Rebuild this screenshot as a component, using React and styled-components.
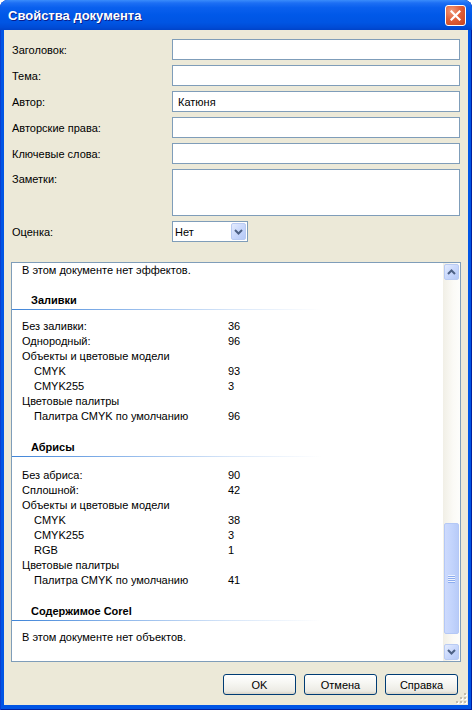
import React from 'react';
import styled, { createGlobalStyle } from 'styled-components';

const GlobalStyle = createGlobalStyle`
  html, body {
    margin: 0;
    padding: 0;
    background: #ffffff;
  }
  body {
    font-family: 'Liberation Sans', Arial, sans-serif;
    font-size: 11px;
    color: #000;
  }
`;

const Window = styled.div`
  width: 472px;
  height: 710px;
  display: flex;
  flex-direction: column;
  background: #0055e5;
  border-radius: 8px 8px 0 0;
  box-shadow: inset 1px 0 0 #0a3fd0, inset -1px 0 0 #00209f, inset 0 -1px 0 #00209f;
  overflow: hidden;
`;

const TitleBar = styled.div`
  height: 30px;
  flex: none;
  display: flex;
  align-items: center;
  justify-content: space-between;
  padding: 0 6px 0 8px;
  box-sizing: border-box;
  background: linear-gradient(
    to bottom,
    #3a8cfb 0%,
    #1d6ff4 10%,
    #0a60ee 25%,
    #0058e8 50%,
    #0055e3 75%,
    #004bd6 92%,
    #0043c8 100%
  );
`;

const Title = styled.span`
  font-family: 'Liberation Sans', Arial, sans-serif;
  font-weight: bold;
  font-size: 13px;
  color: #ffffff;
  text-shadow: 1px 1px 0 #0a1e8c;
`;

const CloseButton = styled.div`
  width: 21px;
  height: 21px;
  box-sizing: border-box;
  border: 1px solid #ffffff;
  border-radius: 3px;
  background: radial-gradient(circle at 30% 25%, #f09a7a 0%, #e0603a 45%, #c8431c 100%);
  display: flex;
  align-items: center;
  justify-content: center;
`;

const Client = styled.div`
  flex: 1;
  margin: 0 4px 5px;
  background: #ece9d8;
  padding: 9px 7px 10px 8px;
  display: flex;
  flex-direction: column;
  position: relative;
`;

const Form = styled.div`
  display: grid;
  grid-template-columns: 160px 288px;
  row-gap: 5px;
  align-items: center;
`;

const Label = styled.div`
  line-height: 13px;
  align-self: ${p => (p.$top ? 'start' : 'center')};
  padding-top: ${p => (p.$top ? '4px' : '2px')};
`;

const TextInput = styled.input`
  height: 21px;
  box-sizing: border-box;
  border: 1px solid #7f9db9;
  background: #ffffff;
  padding: 0 4px 0 5px;
  margin: 0;
  font-family: 'Liberation Sans', Arial, sans-serif;
  font-size: 11px;
  color: #000;
  outline: none;
`;

const NotesArea = styled.textarea`
  height: 47px;
  box-sizing: border-box;
  border: 1px solid #7f9db9;
  background: #ffffff;
  margin: 0;
  padding: 2px 4px;
  resize: none;
  font-family: 'Liberation Sans', Arial, sans-serif;
  font-size: 11px;
  outline: none;
`;

const Combo = styled.div`
  width: 76px;
  height: 21px;
  box-sizing: border-box;
  border: 1px solid #7f9db9;
  background: #ffffff;
  display: flex;
  align-items: center;
`;

const ComboText = styled.span`
  flex: 1;
  padding-left: 2px;
`;

const ArrowButton = styled.div`
  width: ${p => p.$w || 15}px;
  height: ${p => p.$h || 16}px;
  box-sizing: border-box;
  margin: 1px;
  border: 1px solid #b9cbf3;
  border-radius: 2px;
  background: linear-gradient(to bottom right, #e4ecfe 0%, #c9d8fc 50%, #b5c9f7 100%);
  display: flex;
  align-items: center;
  justify-content: center;
  flex: none;
`;

const Panel = styled.div`
  margin-top: 20px;
  margin-left: -1px;
  width: 450px;
  height: 400px;
  box-sizing: border-box;
  border: 1px solid #7f9db9;
  background: #ffffff;
  display: flex;
`;

const Content = styled.div`
  flex: 1;
  padding-left: 10px;
  overflow: hidden;
`;

const Note = styled.div`
  line-height: 15px;
`;

const Section = styled.div`
  margin-top: ${p => p.$gap}px;
`;

const SectionHeader = styled.div`
  margin-left: -10px;
  padding: 0 0 2px 19px;
  line-height: 15px;
  font-weight: bold;
  background: linear-gradient(to right, #3f84d8 0%, #8db6ea 35%, #d6e5f8 70%, #ffffff 100%)
    no-repeat left bottom / 310px 1px;
`;

const Rows = styled.div`
  margin-top: ${p => p.$gap}px;
`;

const Row = styled.div`
  display: grid;
  grid-template-columns: 206px auto;
  line-height: 15px;
`;

const RowLabel = styled.span`
  padding-left: ${p => (p.$indent ? '12px' : '0')};
`;

const ScrollBar = styled.div`
  width: 17px;
  flex: none;
  display: flex;
  flex-direction: column;
  background: linear-gradient(to right, #f1efe6 0%, #fbfaf6 60%, #fdfdfb 100%);
`;

const Track = styled.div`
  flex: 1;
  display: flex;
  flex-direction: column;
  justify-content: flex-end;
  padding-bottom: 9px;
`;

const Thumb = styled.div`
  height: 111px;
  margin: 0 1px;
  box-sizing: border-box;
  border: 1px solid #b4c8f6;
  border-radius: 2px;
  background: linear-gradient(to right, #cddafd 0%, #c3d4fc 50%, #b8cbf8 100%);
  display: flex;
  align-items: center;
  justify-content: center;
`;

const Footer = styled.div`
  margin-top: 12px;
  display: flex;
  justify-content: flex-end;
  gap: 8px;
  padding-right: 3px;
`;

const DlgButton = styled.button`
  width: 73px;
  height: 21px;
  box-sizing: border-box;
  border: 1px solid #003c74;
  border-radius: 3px;
  background: linear-gradient(to bottom, #ffffff 0%, #f7f7f3 40%, #ecebe4 85%, #d8d3c6 100%);
  font-family: 'Liberation Sans', Arial, sans-serif;
  font-size: 11px;
  color: #000;
  padding: 0;
`;

const Grip = styled.svg`
  position: absolute;
  right: 1px;
  bottom: 1px;
`;

const ChevronUp = () => (
  <svg width="9" height="6" viewBox="0 0 9 6">
    <path d="M1 5 L4.5 1.5 L8 5" fill="none" stroke="#4d6185" strokeWidth="2" />
  </svg>
);

const ChevronDown = () => (
  <svg width="9" height="6" viewBox="0 0 9 6">
    <path d="M1 1 L4.5 4.5 L8 1" fill="none" stroke="#4d6185" strokeWidth="2" />
  </svg>
);

const fields = [
  { label: 'Заголовок:', value: '' },
  { label: 'Тема:', value: '' },
  { label: 'Автор:', value: 'Катюня' },
  { label: 'Авторские права:', value: '' },
  { label: 'Ключевые слова:', value: '' },
];

const sections = [
  {
    title: 'Заливки',
    gap: 15,
    rowsGap: 9,
    rows: [
      ['Без заливки:', '36'],
      ['Однородный:', '96'],
      ['Объекты и цветовые модели', ''],
      ['CMYK', '93', true],
      ['CMYK255', '3', true],
      ['Цветовые палитры', ''],
      ['Палитра CMYK по умолчанию', '96', true],
    ],
  },
  {
    title: 'Абрисы',
    gap: 16,
    rowsGap: 11,
    rows: [
      ['Без абриса:', '90'],
      ['Сплошной:', '42'],
      ['Объекты и цветовые модели', ''],
      ['CMYK', '38', true],
      ['CMYK255', '3', true],
      ['RGB', '1', true],
      ['Цветовые палитры', ''],
      ['Палитра CMYK по умолчанию', '41', true],
    ],
  },
];

export default function App() {
  return (
    <>
      <GlobalStyle />
      <Window>
        <TitleBar>
          <Title>Свойства документа</Title>
          <CloseButton>
            <svg width="11" height="11" viewBox="0 0 11 11">
              <path d="M1.5 1.5 L9.5 9.5 M9.5 1.5 L1.5 9.5" stroke="#ffffff" strokeWidth="2.2" strokeLinecap="square" />
            </svg>
          </CloseButton>
        </TitleBar>
        <Client>
          <Form>
            {fields.map(f => (
              <React.Fragment key={f.label}>
                <Label>{f.label}</Label>
                <TextInput readOnly defaultValue={f.value} />
              </React.Fragment>
            ))}
            <Label $top>Заметки:</Label>
            <NotesArea readOnly defaultValue="" />
            <Label>Оценка:</Label>
            <Combo>
              <ComboText>Нет</ComboText>
              <ArrowButton $w={15} $h={17}>
                <ChevronDown />
              </ArrowButton>
            </Combo>
          </Form>

          <Panel>
            <Content>
              <Note>В этом документе нет эффектов.</Note>
              {sections.map(s => (
                <Section key={s.title} $gap={s.gap}>
                  <SectionHeader>{s.title}</SectionHeader>
                  <Rows $gap={s.rowsGap}>
                    {s.rows.map(([label, value, indent], i) => (
                      <Row key={i}>
                        <RowLabel $indent={indent}>{label}</RowLabel>
                        <span>{value}</span>
                      </Row>
                    ))}
                  </Rows>
                </Section>
              ))}
              <Section $gap={16}>
                <SectionHeader>Содержимое Corel</SectionHeader>
                <Rows $gap={9}>
                  <Note>В этом документе нет объектов.</Note>
                </Rows>
              </Section>
            </Content>
            <ScrollBar>
              <ArrowButton>
                <ChevronUp />
              </ArrowButton>
              <Track>
                <Thumb>
                  <svg width="7" height="8" viewBox="0 0 7 8">
                    <path d="M0 0.5 H7 M0 2.5 H7 M0 4.5 H7 M0 6.5 H7" stroke="#eef3fe" strokeWidth="1" />
                    <path d="M0 1.5 H7 M0 3.5 H7 M0 5.5 H7 M0 7.5 H7" stroke="#8cacf0" strokeWidth="1" />
                  </svg>
                </Thumb>
              </Track>
              <ArrowButton>
                <ChevronDown />
              </ArrowButton>
            </ScrollBar>
          </Panel>

          <Footer>
            <DlgButton>OK</DlgButton>
            <DlgButton>Отмена</DlgButton>
            <DlgButton>Справка</DlgButton>
          </Footer>

          <Grip width="11" height="11" viewBox="0 0 11 11">
            {[[8, 0], [8, 4], [4, 4], [8, 8], [4, 8], [0, 8]].map(([x, y]) => (
              <React.Fragment key={`${x}-${y}`}>
                <rect x={x + 1} y={y + 1} width="2" height="2" fill="#ffffff" />
                <rect x={x} y={y} width="2" height="2" fill="#c1bcad" />
              </React.Fragment>
            ))}
          </Grip>
        </Client>
      </Window>
    </>
  );
}
